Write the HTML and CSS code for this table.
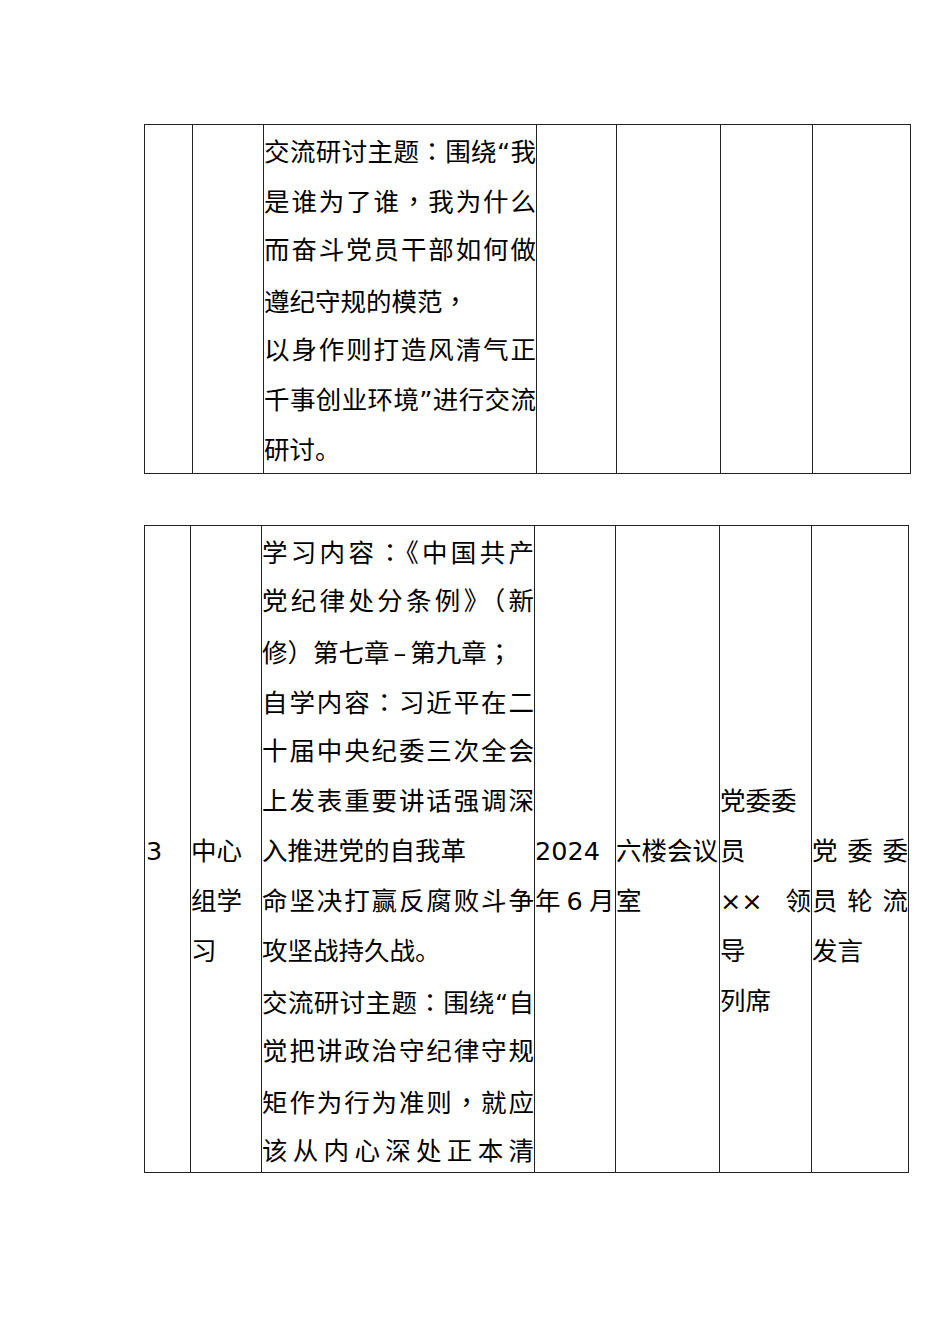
FILE: index.html
```html
<!DOCTYPE html>
<html lang="zh-CN">
<head>
<meta charset="utf-8">
<title>学习计划表</title>
<link rel="stylesheet" href="styles.css">
</head>
<body>
<div class="page">
  <table class="t t1">
    <colgroup>
      <col class="a1"><col class="a2"><col class="a3"><col class="a4"><col class="a5"><col class="a6"><col class="a7">
    </colgroup>
    <tr>
      <td></td>
      <td></td>
      <td class="txt">
        <div class="clip1">
          <span class="l j">交流研讨主题<span class="p" lang="zh-TW">：</span>围绕“我</span>
          <span class="l j">是谁为了谁<span class="p" lang="zh-TW">，</span>我为什么</span>
          <span class="l j">而奋斗党员干部如何做</span>
          <span class="l">遵纪守规的模范<span class="p" lang="zh-TW">，</span></span>
          <span class="l j">以身作则打造风清气正</span>
          <span class="l j">千事创业环境”进行交流</span>
          <span class="l">研讨。</span>
        </div>
      </td>
      <td></td>
      <td></td>
      <td></td>
      <td></td>
    </tr>
  </table>

  <table class="t t2">
    <colgroup>
      <col class="b1"><col class="b2"><col class="b3"><col class="b4"><col class="b5"><col class="b6"><col class="b7">
    </colgroup>
    <tr>
      <td class="mid num"><span class="l">3</span></td>
      <td class="mid"><span class="l">中心</span><span class="l">组学</span><span class="l">习</span></td>
      <td class="txt">
        <div class="clip2">
          <span class="l j">学习内容<span class="p" lang="zh-TW">：</span>《中国共产</span>
          <span class="l j">党纪律处分条例》（新</span>
          <span class="l">修）第七章<span class="dash">–</span>第九章<span class="p" lang="zh-TW">；</span></span>
          <span class="l j">自学内容<span class="p" lang="zh-TW">：</span>习近平在二</span>
          <span class="l j">十届中央纪委三次全会</span>
          <span class="l j">上发表重要讲话强调深</span>
          <span class="l">入推进党的自我革</span>
          <span class="l j">命坚决打赢反腐败斗争</span>
          <span class="l">攻坚战持久战。</span>
          <span class="l j">交流研讨主题<span class="p" lang="zh-TW">：</span>围绕“自</span>
          <span class="l j">觉把讲政治守纪律守规</span>
          <span class="l j">矩作为行为准则<span class="p" lang="zh-TW">，</span>就应</span>
          <span class="l j">该从内心深处正本清</span>
        </div>
      </td>
      <td class="mid"><span class="l">2024</span><span class="l date">年 6 月</span></td>
      <td class="mid"><span class="l">六楼会议</span><span class="l">室</span></td>
      <td class="mid up"><span class="l">党委委</span><span class="l">员</span><span class="l j">×× 领</span><span class="l">导</span><span class="l">列席</span></td>
      <td class="mid"><span class="l j">党委委</span><span class="l j">员轮流</span><span class="l">发言</span></td>
    </tr>
  </table>
</div>
</body>
</html>
```

FILE: styles.css
```css
html, body {
  margin: 0;
  padding: 0;
  background: #ffffff;
}

body {
  font-family: "DejaVu Sans", "Noto Sans CJK SC", sans-serif;
  font-size: 25.5px;
  color: #000000;
}

.page {
  width: 950px;
  padding: 124px 0 0 144px;
  box-sizing: border-box;
}

.t {
  border-collapse: collapse;
  table-layout: fixed;
}

.t td {
  border: 1px solid #222222;
  padding: 0;
  vertical-align: top;
  overflow: hidden;
}

.t1 { width: 767px; }
.a1 { width: 48px; }
.a2 { width: 71px; }
.a3 { width: 273px; }
.a4 { width: 80px; }
.a5 { width: 104px; }
.a6 { width: 92px; }
.a7 { width: 98px; }

.t2 {
  width: 765px;
  margin-top: 51px;
}
.b1 { width: 46px; }
.b2 { width: 71px; }
.b3 { width: 273px; }
.b4 { width: 81px; }
.b5 { width: 104px; }
.b6 { width: 92px; }
.b7 { width: 97px; }

.l {
  display: block;
  line-height: 50px;
  height: 50px;
  white-space: nowrap;
  text-align: left;
}

.j {
  text-align: justify;
  text-align-last: justify;
}

.p {
  font-family: "Noto Sans CJK TC", sans-serif;
}

.dash {
  padding: 0 4px;
}

.clip1 {
  height: 348px;
  overflow: hidden;
}

.clip2 {
  height: 646px;
  overflow: hidden;
}

.mid {
  padding-top: 300px !important;
}

.mid.up {
  padding-top: 250px !important;
}

.num {
  padding-left: 1px !important;
}

.date {
  word-spacing: -2px;
}
```
